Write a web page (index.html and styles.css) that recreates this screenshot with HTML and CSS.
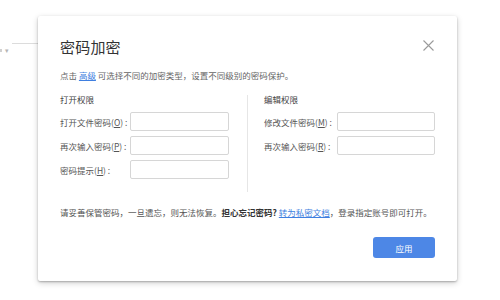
FILE: index.html
```html
<!DOCTYPE html>
<html lang="zh-CN">
<head>
<meta charset="utf-8">
<title>密码加密</title>
<link rel="stylesheet" href="styles.css">
</head>
<body>
<div class="backdrop">
  <span class="bd-line"></span>
  <span class="bd-mark"></span>
  <span class="bd-caret">▾</span>
</div>
<div class="dialog">
  <button class="close" aria-label="关闭">
    <svg width="11" height="11" viewBox="0 0 11 11"><path d="M0.5 0.5 L10.5 10.5 M10.5 0.5 L0.5 10.5" stroke="#9a9a9a" stroke-width="1.1" fill="none"/></svg>
  </button>
  <div class="title">密码加密</div>
  <div class="desc">点击 <a class="link">高级</a> 可选择不同的加密类型，设置不同级别的密码保护。</div>
  <div class="columns">
    <div class="col col-left">
      <div class="head">打开权限</div>
      <div class="rows">
        <div class="row"><span class="label">打开文件密码(<u>O</u>) :</span><span class="input"></span></div>
        <div class="row"><span class="label">再次输入密码(<u>P</u>) :</span><span class="input"></span></div>
        <div class="row"><span class="label">密码提示(<u>H</u>) :</span><span class="input"></span></div>
      </div>
    </div>
    <div class="col col-right">
      <div class="head">编辑权限</div>
      <div class="rows">
        <div class="row"><span class="label wide">修改文件密码(<u>M</u>) :</span><span class="input"></span></div>
        <div class="row"><span class="label wide">再次输入密码(<u>R</u>) :</span><span class="input"></span></div>
      </div>
    </div>
  </div>
  <div class="note">请妥善保管密码，一旦遗忘，则无法恢复。<b>担心忘记密码?</b> <a class="link">转为私密文档</a>，登录指定账号即可打开。</div>
  <div class="actions"><button class="apply">应用</button></div>
</div>
</body>
</html>
```

FILE: styles.css
```css
html, body {
  margin: 0;
  padding: 0;
  background: #ffffff;
  width: 500px;
  height: 300px;
  overflow: hidden;
  font-family: "Noto Sans CJK SC", "Noto Sans", sans-serif;
}

.backdrop {
  position: absolute;
  left: 0;
  top: 0;
  width: 40px;
  height: 60px;
}
.bd-line {
  position: absolute;
  left: 12px;
  top: 43px;
  width: 26px;
  height: 1px;
  background: #dcdcdc;
}
.bd-mark {
  position: absolute;
  left: 0;
  top: 49px;
  width: 2px;
  height: 3px;
  background: #d0d0d0;
}
.bd-caret {
  position: absolute;
  left: 5px;
  top: 44px;
  font-size: 7px;
  line-height: 12px;
  color: #b5b5b5;
}

.dialog {
  position: relative;
  box-sizing: border-box;
  margin: 16px 0 0 38px;
  width: 419px;
  height: 265px;
  padding: 21px 22px 0 22px;
  background: #fff;
  border-radius: 2px;
  box-shadow: 0 1px 2px rgba(0,0,0,0.25), 0 2px 6px rgba(0,0,0,0.18);
  color: #333;
}

.close {
  position: absolute;
  right: 23px;
  top: 24px;
  width: 11px;
  height: 11px;
  padding: 0;
  border: 0;
  background: none;
  display: flex;
}

.title {
  font-size: 15px;
  line-height: 20px;
  height: 20px;
  color: #333;
  letter-spacing: 0.2px;
}

.desc {
  margin-top: 12px;
  font-size: 8.5px;
  line-height: 12px;
  color: #666;
}

.link {
  color: #3f7fe0;
  text-decoration: underline;
}

.columns {
  margin-top: 12px;
  display: flex;
  height: 99px;
}
.col-left {
  width: 187px;
}
.col-right {
  flex: 1;
  box-sizing: border-box;
  margin-top: 2px;
  padding-left: 16px;
  border-left: 1px solid #e6e6e6;
}
.col-right .head {
  margin-top: -2px;
}
.head {
  font-size: 8.5px;
  line-height: 12px;
  color: #444;
}
.rows {
  margin-top: 7px;
  display: flex;
  flex-direction: column;
  gap: 5px;
}
.row {
  display: flex;
  align-items: center;
  height: 19px;
}
.label {
  width: 70px;
  font-size: 8.5px;
  line-height: 12px;
  color: #555;
  white-space: nowrap;
}
.label.wide {
  width: 73px;
}
.input {
  box-sizing: border-box;
  width: 99px;
  height: 19px;
  border: 1px solid #d6d6d6;
  border-radius: 2px;
  background: #fff;
}
.col-right .input {
  width: 98px;
}

.note {
  margin-top: 14px;
  font-size: 8.5px;
  line-height: 12px;
  color: #555;
  white-space: nowrap;
}
.note b {
  color: #333;
  font-weight: 700;
}

.actions {
  margin-top: 19px;
  display: flex;
  justify-content: flex-end;
}
.apply {
  width: 62px;
  height: 21px;
  border: 0;
  border-radius: 3px;
  background: #4d87e6;
  color: #fff;
  font-family: "Noto Sans CJK SC", "Noto Sans", sans-serif;
  font-size: 8.5px;
  padding: 0;
}
```
